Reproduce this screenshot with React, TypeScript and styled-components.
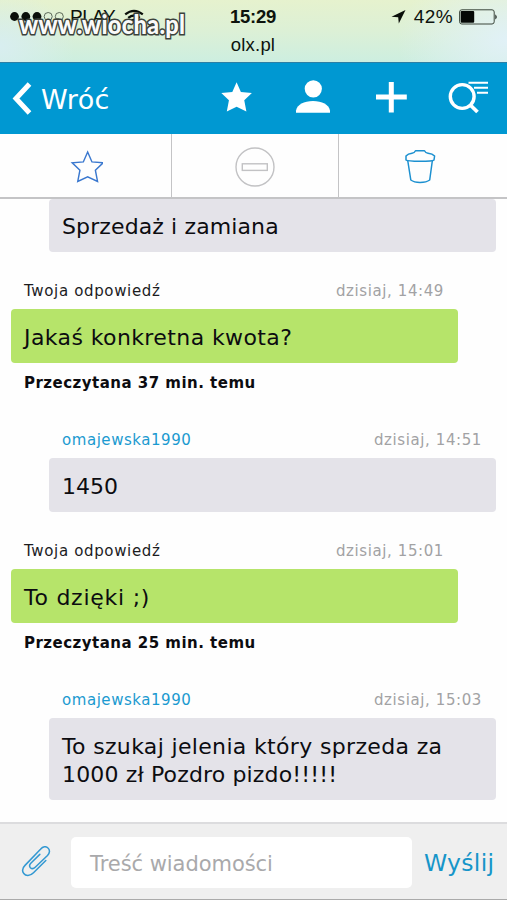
import React from "react";
import styled, { createGlobalStyle } from "styled-components";

const Global = createGlobalStyle`
  * { box-sizing: border-box; }
  body { margin: 0; background: #fefefe; overflow: hidden; }
`;

const Screen = styled.div`
  width: 507px;
  height: 900px;
  display: flex;
  flex-direction: column;
  overflow: hidden;
  background: #fefefe;
  font-family: "DejaVu Sans", sans-serif;
  color: #0c0c10;
  white-space: nowrap;
`;

const StatusBar = styled.header`
  position: relative;
  flex: none;
  height: 62px;
  display: grid;
  grid-template-columns: 1fr 60px 1fr;
  padding: 6px 9px 0 10px;
  background:
    radial-gradient(ellipse 110px 75px at 100% 65%, #e1f1f7 0%, rgba(225, 241, 247, 0) 100%),
    radial-gradient(ellipse 75px 55px at 0% 75%, #d8eef0 0%, rgba(216, 238, 240, 0) 100%),
    linear-gradient(180deg, #e6f2ce 0%, #dcf0d6 50%, #cdeee0 100%);
  font-family: "Liberation Sans", Arial, sans-serif;
  font-size: 19px;
  line-height: 22px;
  color: #0d130d;
`;

const Carrier = styled.div`
  display: flex;
  align-items: center;
  height: 22px;
`;
const CarrierName = styled.span`
  margin: 0 9px 0 6px;
  letter-spacing: -0.5px;
`;
const StatusCenter = styled.div`
  text-align: center;
`;
const Clock = styled.div`
  height: 28px;
  margin-left: -2px;
  font-weight: bold;
  font-size: 18.5px;
  letter-spacing: -0.3px;
`;
const Host = styled.div`
  margin-left: -2px;
  font-size: 18.5px;
  letter-spacing: 0.2px;
`;
const Power = styled.div`
  display: flex;
  align-items: center;
  justify-content: flex-end;
  height: 22px;
`;
const Percent = styled.span`
  margin: 0 6px 0 8px;
  letter-spacing: 0.4px;
`;
const Watermark = styled.div`
  position: absolute;
  left: 19px;
  top: 8px;
  font-family: Lato, sans-serif;
  font-weight: 900;
  font-size: 27px;
  line-height: 32px;
  letter-spacing: 0.3px;
  transform: scaleX(0.875);
  transform-origin: left center;
  color: #fafafa;
  -webkit-text-stroke: 3.2px #3c423c;
  paint-order: stroke fill;
`;

const NavBar = styled.nav`
  flex: none;
  height: 72px;
  display: flex;
  align-items: center;
  border-top: 1px solid #2b7fa6;
  background: #0098d2;
  color: #fff;
  padding-left: 12px;
`;
const Back = styled.div`
  display: flex;
  align-items: center;
  width: 208px;
  font-size: 27px;
  line-height: 36px;
`;
const BackLabel = styled.span`
  margin-left: 9px;
  padding-top: 2px;
  letter-spacing: 0.35px;
`;
const NavIcons = styled.div`
  display: flex;
  align-items: center;
`;

const Actions = styled.div`
  flex: none;
  height: 65px;
  display: grid;
  grid-template-columns: 172px 167px 162px;
  border-bottom: 2px solid #c4c4c6;
`;
const Action = styled.div<{ $last?: boolean }>`
  display: flex;
  justify-content: center;
  align-items: center;
  padding-top: ${(p) => (p.$last ? 2 : 1)}px;
  border-right: ${(p) => (p.$last ? "0" : "1px solid #c4c4c6")};
`;

const Thread = styled.main`
  flex: 1;
  min-height: 0;
  overflow: hidden;
`;
const Message = styled.section<{ $mine?: boolean }>`
  width: 447px;
  margin-left: ${(p) => (p.$mine ? 11 : 49)}px;
  margin-bottom: ${(p) => (p.$mine ? 19 : 21)}px;
`;
const Meta = styled.div`
  height: 36px;
  display: flex;
  justify-content: space-between;
  padding: 0 13px;
  font-size: 15px;
  line-height: 36px;
`;
const Author = styled.span<{ $mine?: boolean }>`
  color: ${(p) => (p.$mine ? "#1c1c1e" : "#1b9ad0")};
  letter-spacing: ${(p) => (p.$mine ? "0.65px" : "0.55px")};
`;
const Time = styled.span`
  margin-right: 1px;
  color: #a2a2a4;
  letter-spacing: 0.6px;
`;
const Bubble = styled.div<{ $mine?: boolean; $cut?: boolean }>`
  padding: ${(p) => (p.$cut ? "14px 13px 11px" : "15px 13px 11px")};
  border-radius: 4px;
  background: ${(p) => (p.$mine ? "#b6e46a" : "#e4e3e9")};
  font-size: 22px;
  line-height: 28px;
`;
const Line = styled.div<{ $ls?: number }>`
  letter-spacing: ${(p) => p.$ls ?? 0}px;
`;
const Read = styled.div`
  height: 40px;
  padding-left: 13px;
  line-height: 40px;
  font-size: 15px;
  font-weight: bold;
  letter-spacing: 0.48px;
`;

const Composer = styled.footer`
  flex: none;
  height: 78px;
  display: flex;
  align-items: center;
  border-top: 2px solid #dcdcde;
  border-bottom: 1px solid #aaa;
  background: #efefef;
  padding: 1px 0 0 21px;
`;
const Field = styled.div`
  width: 341px;
  height: 51px;
  margin-left: 20px;
  padding-left: 19px;
  border-radius: 5px;
  background: #fff;
  color: #a9a9ab;
  font-size: 21px;
  line-height: 54px;
  letter-spacing: -0.05px;
`;
const Send = styled.div`
  margin-left: 12px;
  padding-top: 1px;
  color: #1695c9;
  font-size: 23.5px;
  letter-spacing: 0.3px;
`;

const STAR = "M15 1 L19.2 10.6 L30 11.5 L22.5 18.7 L24.6 29.6 L15 25 L5.4 29.6 L7.5 18.7 L0 11.5 L10.8 10.6 Z";

type Msg = { mine?: boolean; time: string; lines: [string, number][]; read?: string };
const messages: Msg[] = [
  { mine: true, time: "dzisiaj, 14:49", lines: [["Jakaś konkretna kwota?", 0.4]], read: "Przeczytana 37 min. temu" },
  { time: "dzisiaj, 14:51", lines: [["1450", 0]] },
  { mine: true, time: "dzisiaj, 15:01", lines: [["To dzięki ;)", 0.75]], read: "Przeczytana 25 min. temu" },
  { time: "dzisiaj, 15:03", lines: [["To szukaj jelenia który sprzeda za", 0.34], ["1000 zł Pozdro pizdo!!!!!", 0.15]] },
];

export default function App() {
  return (
    <Screen>
      <Global />
      <StatusBar>
        <Carrier>
          <svg width="54" height="12" viewBox="0 0 54 12">
            {[4.5, 15.8, 27].map((x) => <circle key={x} cx={x} cy="5.5" r="4.4" fill="#0a0f0a" />)}
            {[38.2, 49.3].map((x) => <circle key={x} cx={x} cy="5.5" r="4" fill="none" stroke="#3b473b" strokeWidth=".8" />)}
          </svg>
          <CarrierName>PLAY</CarrierName>
          <svg width="20" height="16" viewBox="0 0 20 16" fill="none" stroke="#0a0f0a" strokeWidth="2.2">
            <path d="M1.2 5.4 Q10 -1.8 18.8 5.4" />
            <path d="M4.2 8.8 Q10 4.2 15.8 8.8" />
            <path d="M6.8 11 Q10 8.6 13.2 11 L10 14.6Z" fill="#0a0f0a" stroke="none" />
          </svg>
        </Carrier>
        <StatusCenter>
          <Clock>15:29</Clock>
          <Host>olx.pl</Host>
        </StatusCenter>
        <Power>
          <svg width="15" height="14" viewBox="0 0 15 14"><path d="M14.5 0 L7.8 13.5 L7.2 7.3 L.5 6.8 Z" fill="#0a0f0a" /></svg>
          <Percent>42%</Percent>
          <svg width="39" height="16" viewBox="0 0 39 16">
            <rect x=".6" y=".8" width="34.6" height="14.2" rx="2.2" fill="none" stroke="#3a453a" />
            <rect x="1.7" y="2" width="13.5" height="11.8" rx="1" fill="#050805" />
            <path d="M36.4 5.2 Q39 8 36.4 10.6Z" fill="#0a0f0a" />
          </svg>
        </Power>
        <Watermark>www.wiocha.pl</Watermark>
      </StatusBar>

      <NavBar>
        <Back>
          <svg width="20" height="33" viewBox="0 0 20 33" fill="none" stroke="#fff" strokeWidth="5"><path d="M17.5 2 L4 16.5 L17.5 31" /></svg>
          <BackLabel>Wróć</BackLabel>
        </Back>
        <NavIcons>
          <svg width="287" height="72" viewBox="220 62.5 287 72" fill="#fff">
            <path d={STAR} transform="translate(221.3 80.8) scale(1.02)" />
            <circle cx="313.3" cy="88.3" r="8.6" />
            <path d="M296 112.3 V110 C297 104 304 100.4 313 100.4 C322 100.4 329 104 330 110 V112.3Z" />
            <path d="M388.8 81.5 h5 v12.4 h13 v5 h-13 v13 h-5 v-13 h-12.8 v-5 h12.8z" />
            <g fill="none" stroke="#fff">
              <circle cx="462.2" cy="96" r="11.9" strokeWidth="3.4" />
              <path d="M469.8 104 L477.5 111.5" strokeWidth="3.8" />
              <path d="M468.5 82.2 H488 M474 87.2 H488 M477 92.2 H488" strokeWidth="2" />
            </g>
          </svg>
        </NavIcons>
      </NavBar>

      <Actions>
        <Action>
          <svg width="34" height="34" viewBox="-1 0 34 34" fill="none" stroke="#3a78cf" strokeWidth="1.4"><path d={STAR} transform="translate(2.2 2) scale(1.03)" /></svg>
        </Action>
        <Action>
          <svg width="42" height="42" viewBox="0 0 42 42" fill="none" stroke="#c2c2c4" strokeWidth="1.4">
            <circle cx="21" cy="22" r="19" /><rect x="8.3" y="18.8" width="25" height="6.6" />
          </svg>
        </Action>
        <Action $last>
          <svg width="34" height="38" viewBox="403 148 34 38" fill="none" stroke="#1c90d0" strokeWidth="1.5" strokeLinejoin="round">
            <path d="M406 160 V156 Q408 153.7 412 153.2 Q414.5 153 415.5 150.8 H424.5 Q425.5 153 428 153.2 Q432.5 153.7 434.6 156 L434 160 Q432.8 161.3 420 161.3 Q407.5 161.3 406 160Z" />
            <path d="M407.8 161 L410.8 180 Q414 182.4 420 182.4 Q426.5 182.4 429.7 180 L432.3 161" />
          </svg>
        </Action>
      </Actions>

      <Thread>
        <Message>
          <Bubble $cut><Line $ls={0.12}>Sprzedaż i zamiana</Line></Bubble>
        </Message>
        {messages.map((m) => (
          <Message key={m.time} $mine={m.mine}>
            <Meta>
              <Author $mine={m.mine}>{m.mine ? "Twoja odpowiedź" : "omajewska1990"}</Author>
              <Time>{m.time}</Time>
            </Meta>
            <Bubble $mine={m.mine}>
              {m.lines.map(([text, ls]) => <Line key={text} $ls={ls}>{text}</Line>)}
            </Bubble>
            {m.read && <Read>{m.read}</Read>}
          </Message>
        ))}
      </Thread>

      <Composer>
        <svg width="30" height="32" viewBox="21 846 30 32" fill="none" stroke="#3298d2" strokeWidth="1.5" strokeLinecap="round">
          <path d="M45.8 860.5 L33.5 872.8 C30 876.5 25.5 876 23.8 873.5 C21.8 870.8 22.6 867.8 25 865.4 L40.5 849.2 C43 846.3 46 846 48 848 C50.2 850 49.8 853 47.5 855.5 L35.2 867.3 C33.5 869 31.5 868.8 30.4 867.7 C29.2 866.4 29.5 864.7 30.8 863.3 L39.8 854.4" />
        </svg>
        <Field>Treść wiadomości</Field>
        <Send>Wyślij</Send>
      </Composer>
    </Screen>
  );
}
